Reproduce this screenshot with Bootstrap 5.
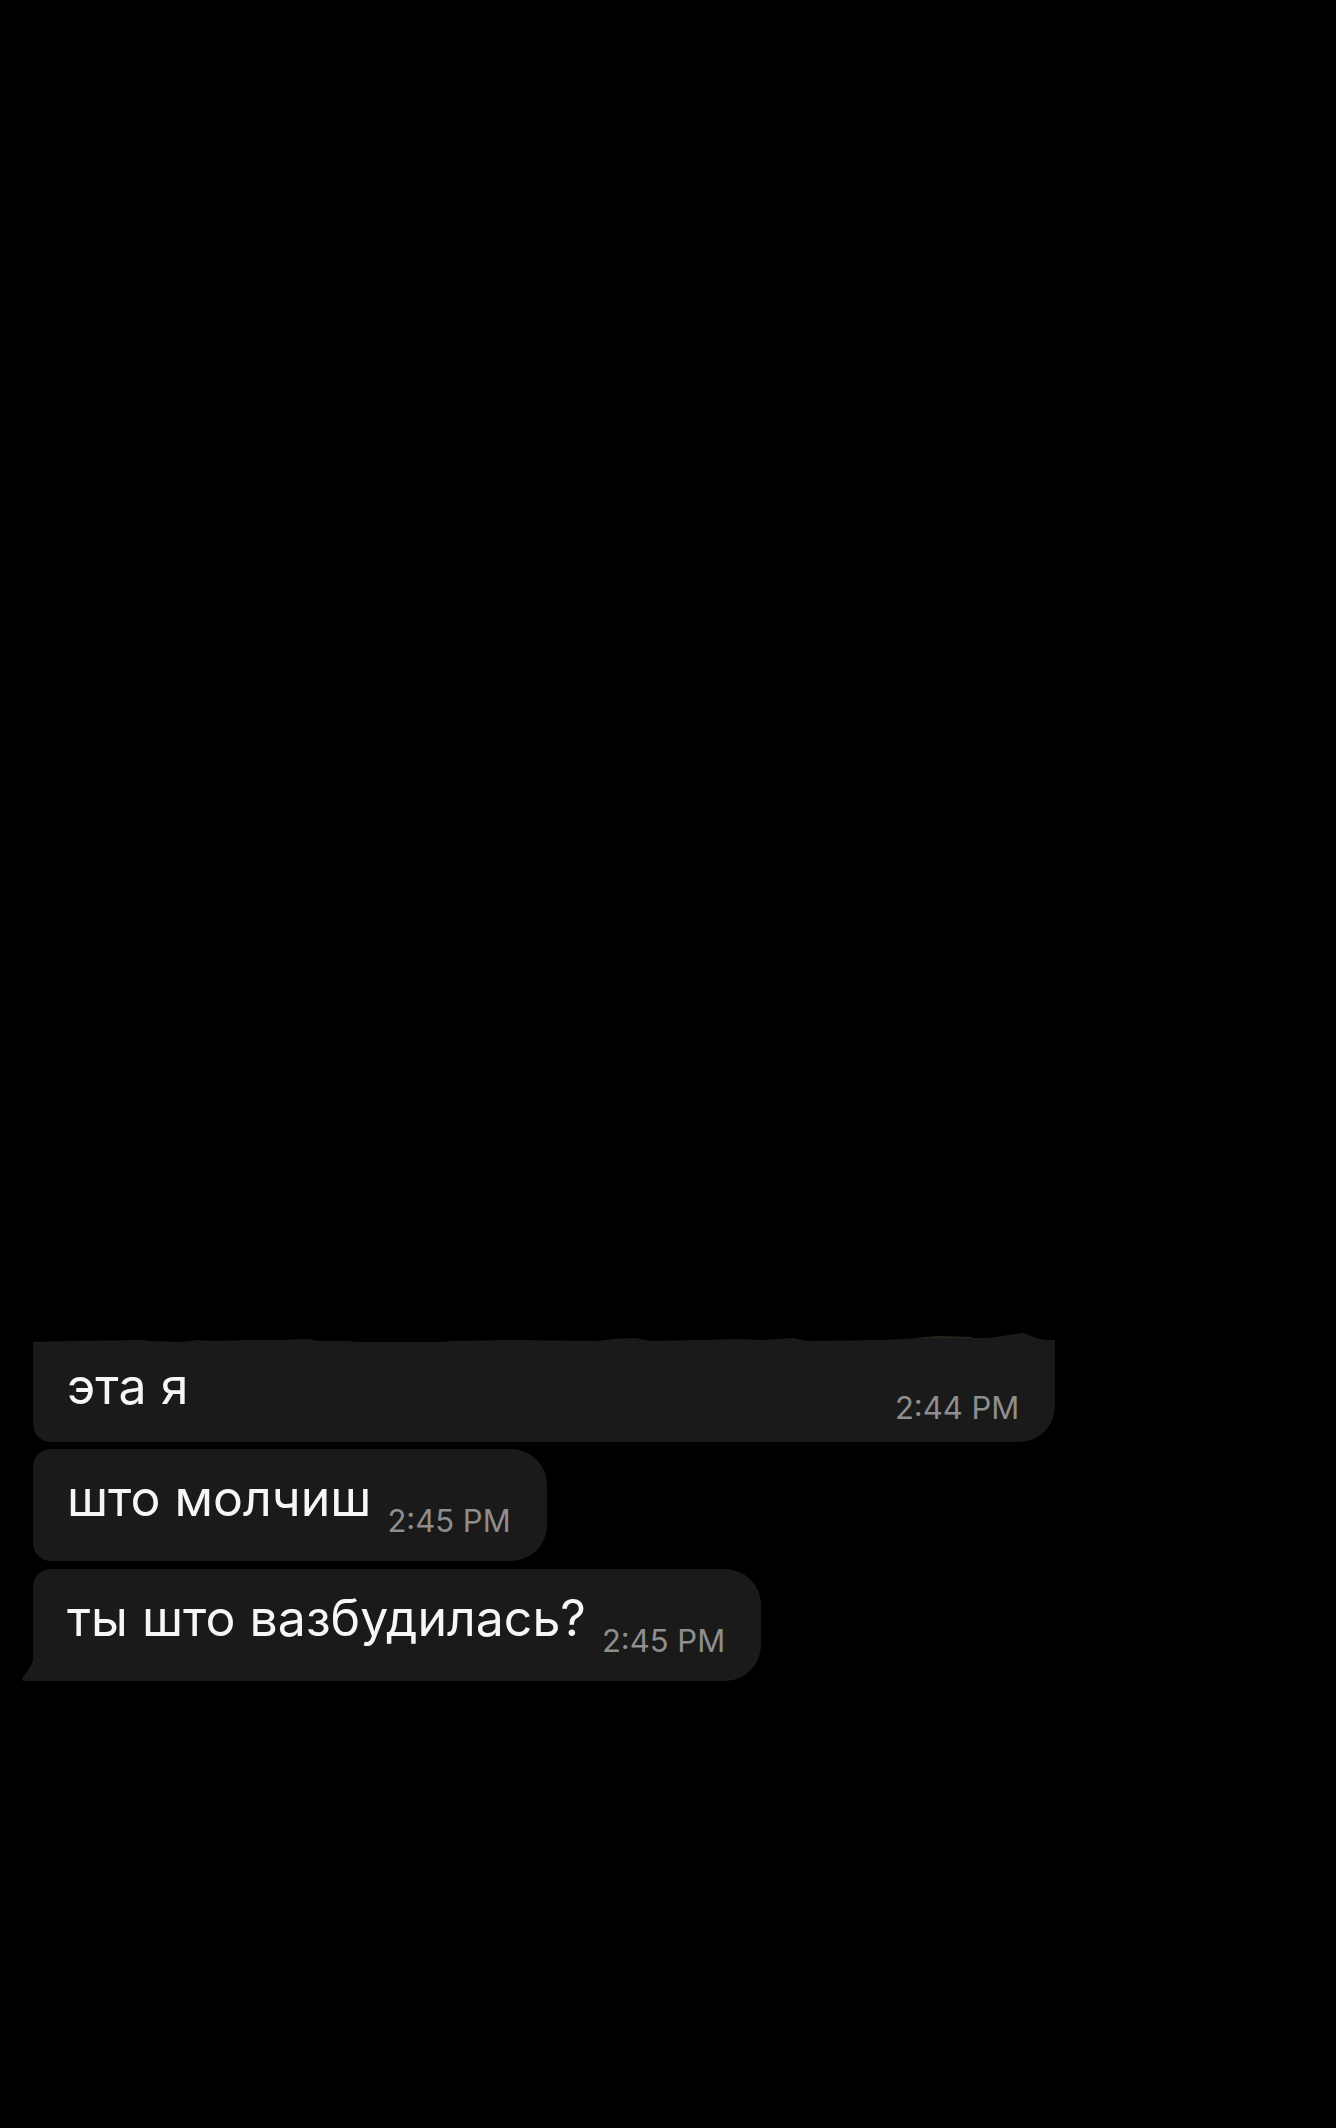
<!DOCTYPE html>
<html lang="ru">
<head>
<meta charset="utf-8">
<meta name="viewport" content="width=device-width, initial-scale=1">
<title>Chat</title>
<link href="https://cdn.jsdelivr.net/npm/bootstrap@5.3.0/dist/css/bootstrap.min.css" rel="stylesheet">
<style>
body { background: #000; font-family: Inter, "Noto Sans", sans-serif; }
.chat-page { display: grid; grid-template-rows: 3fr auto 1fr; min-height: 100vh; padding: 0 25px 0 33px; }
.thread { grid-row: 2; }
.bubble { background: #1a1a1b; color: #f6f6f6; padding: 19px 36px 22px 34px; border-radius: 18px 36px 36px 18px; column-gap: 16px; max-width: 100%; min-height: 112px; }
.bubble-cut { width: 80%; min-height: 100px; padding-top: 14px; padding-bottom: 16px; border-top-left-radius: 0; border-top-right-radius: 0; margin-bottom: 7px; }
.bubble-last { margin-top: 8px; border-bottom-left-radius: 0; }
.msg { font-size: 50px; line-height: 60px; }
.stamp { font-size: 31px; line-height: 36px; color: #8e8e8e; font-weight: 400; white-space: nowrap; }
.torn-edge { left: 0; bottom: 100%; width: 100%; height: 10px; margin-bottom: -1px; }
.tail { right: 100%; bottom: 0; width: 12px; height: 24px; margin-right: -1px; }
</style>
<script src="https://cdn.jsdelivr.net/npm/bootstrap@5.3.0/dist/js/bootstrap.bundle.min.js"></script>
</head>
<body>
<main class="chat-page">
  <section class="thread d-flex flex-column align-items-start" aria-label="Messages">
    <article class="bubble bubble-cut position-relative d-flex justify-content-between">
      <svg class="torn-edge position-absolute" viewBox="0 -2 1022 10" preserveAspectRatio="none" aria-hidden="true"><path fill="#1a1a1b" d="M0 8V7L40 6 110 5 116 6 148 7 165 5 180 6 218 5 245 5 275 4 286 6 315 6 330 8H398L418 6 480 5 565 6 580 4 602 3 618 6 665 5 708 4 728 5 760 3 774 6 850 5 890 3 955 3 990-2 1003 3 1012 5H1022V8Z"/><path fill="#29261e" d="M880 3 905 1 938 2 940 3Z"/></svg>
      <span class="msg align-self-start">эта я</span>
      <time class="stamp align-self-end" datetime="14:44">2:44 PM</time>
    </article>
    <article class="bubble d-flex">
      <span class="msg align-self-start">што молчиш</span>
      <time class="stamp align-self-end" datetime="14:45">2:45 PM</time>
    </article>
    <article class="bubble bubble-last position-relative d-flex">
      <svg class="tail position-absolute" viewBox="0 0 12 24" aria-hidden="true"><path fill="#1a1a1b" d="M12 0C10 10 3 16 0 22Q0 24 3 24H12Z"/></svg>
      <span class="msg align-self-start">ты што вазбудилась?</span>
      <time class="stamp align-self-end" datetime="14:45">2:45 PM</time>
    </article>
  </section>
</main>
</body>
</html>
